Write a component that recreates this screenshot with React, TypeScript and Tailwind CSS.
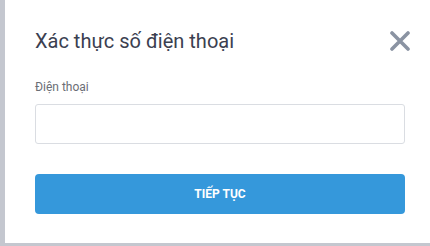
import { useState } from "react";

const CloseIcon = () => (
  <svg width="20" height="20" viewBox="0 0 20 20" fill="none">
    <path d="M2 2L18 18M18 2L2 18" stroke="#8a93a2" strokeWidth="3.6" strokeLinecap="round" />
  </svg>
);

const App = () => {
  const [phone, setPhone] = useState("");

  return (
    <div className="flex h-[246px] w-[430px] bg-[#c4c7cf] font-['Roboto',sans-serif]">
      <div className="ml-[5px] mb-[3px] flex-1 bg-white px-[30px] pt-[29px]">
        <div className="flex items-center justify-between">
          <h2 className="text-[20px] leading-[24px] text-[#3b4050]">Xác thực số điện thoại</h2>
          <button className="mr-[-5px] flex h-5 w-5 items-center justify-center">
            <CloseIcon />
          </button>
        </div>

        <label className="mt-[26px] block text-[12px] leading-[16px] text-[#6b6e75]">Điện thoại</label>
        <input
          value={phone}
          onChange={(e) => setPhone(e.target.value)}
          className="mt-[9px] block h-[40px] w-[370px] rounded-[3px] border border-[#dadde2] px-3 text-sm outline-none"
        />

        <button className="mt-[30px] flex h-[40px] w-[370px] items-center justify-center rounded-[4px] bg-[#3598db] text-[12px] font-bold text-white">
          TIẾP TỤC
        </button>
      </div>
    </div>
  );
};

export default App;
